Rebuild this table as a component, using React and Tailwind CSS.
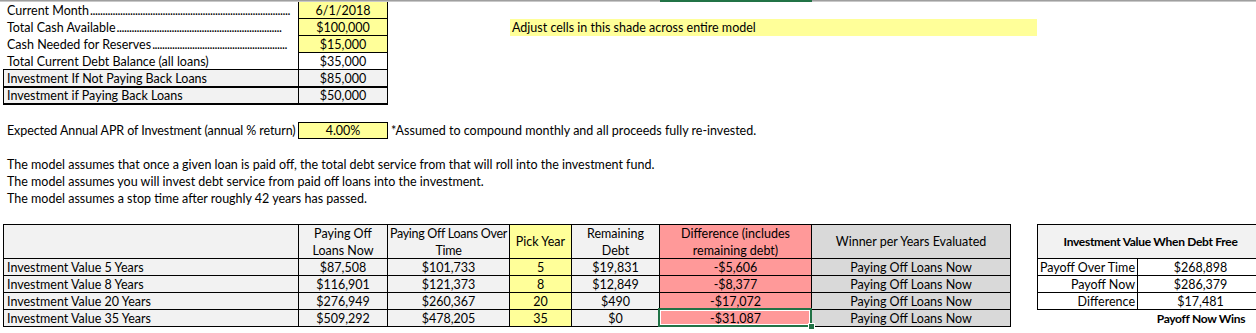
import React from "react";

const G = "grid grid-cols-[3px_296px_89px_122px_62px_88px_152px_199px_26px_101px_126px]";
const R17 = G + " grid-rows-[17px] h-[17px]";
const R18 = G + " grid-rows-[18px] h-[18px]";
const R35 = G + " grid-rows-[35px] h-[35px]";

function Dots({ n }) {
  return (
    <span className="flex-1 overflow-hidden whitespace-nowrap tracking-[-0.45px] pl-[1px]">
      {".".repeat(n)}
    </span>
  );
}

function DataRow({ label, a, b, year, rem, diff, winner, rlabel, rval, last }) {
  return (
    <div className={R17}>
      <div />
      <div className="flex items-center pl-[3px] border-l border-r border-b border-black bg-[#f2f2f2] whitespace-nowrap">{label}</div>
      <div className="flex items-center justify-center border-r border-b border-black bg-[#f2f2f2]">{a}</div>
      <div className="flex items-center justify-center border-r border-b border-black bg-[#f2f2f2]">{b}</div>
      <div className="flex items-center justify-center border-r border-b border-black bg-[#ffff99]">{year}</div>
      <div className="flex items-center justify-center border-r border-b border-black bg-[#f2f2f2]">{rem}</div>
      {last ? (
        <div className="relative flex items-center justify-center border-r border-b border-black bg-[#ff9999]">
          {diff}
          <div className="absolute -left-[2px] -top-[2px] -right-[1px] -bottom-[1px] border-2 border-[#217346] shadow-[inset_0_0_0_1px_white]" />
          <div className="absolute -right-[4px] -bottom-[4px] w-[7px] h-[7px] bg-[#217346] border border-white" />
        </div>
      ) : (
        <div className="flex items-center justify-center border-r border-b border-black bg-[#ff9999]">{diff}</div>
      )}
      <div className="flex items-center justify-center border-r border-b border-black bg-[#d9d9d9] whitespace-nowrap">{winner}</div>
      <div />
      {last ? (
        <>
          <div />
          <div className="flex items-center justify-center font-bold whitespace-nowrap text-[12px] tracking-[-0.3px]">Payoff Now Wins</div>
        </>
      ) : (
        <>
          <div className="flex items-center justify-end pr-[2px] border-l border-r border-b border-black whitespace-nowrap">{rlabel}</div>
          <div className="flex items-center justify-center border-r border-b border-black">{rval}</div>
        </>
      )}
    </div>
  );
}

export default function App() {
  return (
    <div className="w-[1256px] h-[333px] overflow-hidden bg-white text-black text-[12.5px] leading-[15px] font-['Lato','Liberation_Sans',Arial,sans-serif]">
      {/* column header edge */}
      <div className={G + " grid-rows-[2px] h-[2px]"}>
        <div className="col-span-6 border-t border-[#9f9f9f] bg-[#c8c8c8]" />
        <div className="bg-[#217346]" />
        <div className="col-span-4 border-t border-[#9f9f9f] bg-[#c8c8c8]" />
      </div>

      {/* row 1 */}
      <div className={R17}>
        <div />
        <div className="flex items-center pl-[4px] pr-[5px] border-r border-black whitespace-nowrap">
          <span>Current Month</span>
          <Dots n={80} />
        </div>
        <div className="flex items-center justify-center bg-[#ffff99] border-r border-b border-black">6/1/2018</div>
        <div className="col-span-8" />
      </div>

      {/* row 2 */}
      <div className={R17}>
        <div />
        <div className="flex items-center pl-[4px] pr-[6px] border-r border-black whitespace-nowrap">
          <span>Total Cash Available</span>
          <Dots n={66} />
        </div>
        <div className="flex items-center justify-center bg-[#ffff99] border-r border-b border-black">$100,000</div>
        <div />
        <div className="col-span-5 flex items-center pl-[2px] bg-[#ffff99] whitespace-nowrap">
          Adjust cells in this shade across entire model
        </div>
        <div className="col-span-2" />
      </div>

      {/* row 3 */}
      <div className={R17}>
        <div />
        <div className="flex items-center pl-[4px] pr-[6px] border-r border-black whitespace-nowrap">
          <span>Cash Needed for Reserves</span>
          <Dots n={54} />
        </div>
        <div className="flex items-center justify-center bg-[#ffff99] border-r border-b border-black">$15,000</div>
        <div className="col-span-8" />
      </div>

      {/* row 4 */}
      <div className={R17}>
        <div />
        <div className="flex items-center pl-[4px] border-r border-b border-black whitespace-nowrap">
          Total Current Debt Balance (all loans)
        </div>
        <div className="flex items-center justify-center bg-white border-r border-b border-black">$35,000</div>
        <div className="col-span-8" />
      </div>

      {/* row 5 */}
      <div className={R18}>
        <div />
        <div className="flex items-center pl-[3px] bg-[#f2f2f2] border-l border-r border-b-2 border-black whitespace-nowrap">
          Investment If Not Paying Back Loans
        </div>
        <div className="flex items-center justify-center bg-[#f2f2f2] border-r border-b-2 border-black">$85,000</div>
        <div className="col-span-8" />
      </div>

      {/* row 6 */}
      <div className={R17}>
        <div />
        <div className="flex items-center pl-[3px] bg-[#f2f2f2] border-l border-r border-b-2 border-black whitespace-nowrap">
          Investment if Paying Back Loans
        </div>
        <div className="flex items-center justify-center bg-[#f2f2f2] border-r border-b-2 border-black">$50,000</div>
        <div className="col-span-8" />
      </div>

      {/* row 7 */}
      <div className="h-[17px]" />

      {/* row 8 */}
      <div className={R17}>
        <div />
        <div className="flex items-center pl-[4px] border-r border-black whitespace-nowrap tracking-[-0.1px]">
          Expected Annual APR of Investment (annual % return)
        </div>
        <div className="flex items-center justify-center bg-[#ffff99] border-t border-r border-b border-black">4.00%</div>
        <div className="col-span-8 flex items-center pl-[3px] whitespace-nowrap">
          *Assumed to compound monthly and all proceeds fully re-invested.
        </div>
      </div>

      {/* row 9 */}
      <div className="h-[17px]" />

      {/* rows 10-12 */}
      <div className="flex flex-col pl-[7px] whitespace-nowrap">
        <div className="h-[17px] flex items-center">
          The model assumes that once a given loan is paid off, the total debt service from that will roll into the investment fund.
        </div>
        <div className="h-[17px] flex items-center">
          The model assumes you will invest debt service from paid off loans into the investment.
        </div>
        <div className="h-[17px] flex items-center">
          The model assumes a stop time after roughly 42 years has passed.
        </div>
      </div>

      {/* row 13 */}
      <div className="h-[17px]" />

      {/* table header */}
      <div className={R35 + " leading-[17px]"}>
        <div />
        <div className="bg-[#f2f2f2] border-l border-t border-r border-b border-black" />
        <div className="flex items-center justify-center text-center bg-[#f2f2f2] border-t border-r border-b border-black">
          <span>
            Paying Off
            <br />
            Loans Now
          </span>
        </div>
        <div className="flex items-center justify-center text-center bg-[#f2f2f2] border-t border-r border-b border-black whitespace-nowrap tracking-[-0.3px]">
          <span>
            Paying Off Loans Over
            <br />
            Time
          </span>
        </div>
        <div className="flex items-center justify-center bg-[#ffff99] border-t border-r border-b border-black whitespace-nowrap">
          Pick Year
        </div>
        <div className="flex items-center justify-center text-center bg-[#f2f2f2] border-t border-r border-b border-black">
          <span>
            Remaining
            <br />
            Debt
          </span>
        </div>
        <div className="flex items-center justify-center text-center bg-[#ff9999] border-t border-r border-b border-black whitespace-nowrap">
          <span>
            Difference (includes
            <br />
            remaining debt)
          </span>
        </div>
        <div className="flex items-center justify-center bg-[#d9d9d9] border-t border-r border-b border-black whitespace-nowrap">
          Winner per Years Evaluated
        </div>
        <div />
        <div className="col-span-2 flex items-center justify-center font-bold text-[12px] tracking-[-0.3px] bg-[#f2f2f2] border-l border-t border-r border-b border-black whitespace-nowrap">
          Investment Value When Debt Free
        </div>
      </div>

      <DataRow
        label="Investment Value 5 Years"
        a="$87,508"
        b="$101,733"
        year="5"
        rem="$19,831"
        diff="-$5,606"
        winner="Paying Off Loans Now"
        rlabel="Payoff Over Time"
        rval="$268,898"
      />
      <DataRow
        label="Investment Value 8 Years"
        a="$116,901"
        b="$121,373"
        year="8"
        rem="$12,849"
        diff="-$8,377"
        winner="Paying Off Loans Now"
        rlabel="Payoff Now"
        rval="$286,379"
      />
      <DataRow
        label="Investment Value 20 Years"
        a="$276,949"
        b="$260,367"
        year="20"
        rem="$490"
        diff="-$17,072"
        winner="Paying Off Loans Now"
        rlabel="Difference"
        rval="$17,481"
      />
      <DataRow
        label="Investment Value 35 Years"
        a="$509,292"
        b="$478,205"
        year="35"
        rem="$0"
        diff="-$31,087"
        winner="Paying Off Loans Now"
        last
      />
    </div>
  );
}
